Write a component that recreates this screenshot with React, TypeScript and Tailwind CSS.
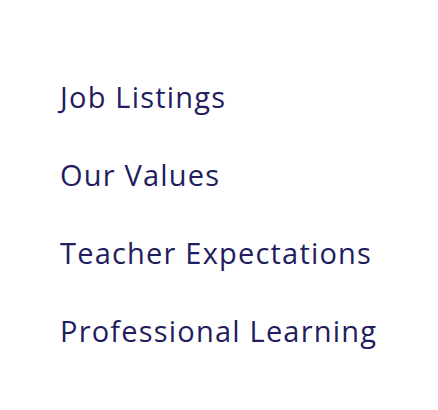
export default function App() {
  const links = ["Job Listings", "Our Values", "Teacher Expectations", "Professional Learning"]
  return (
    <div className="min-h-screen w-[438px] h-[410px] bg-white pt-[79px] pl-[60px]">
      <ul className="flex flex-col gap-[42px]">
        {links.map((l) => (
          <li key={l}>
            <a
              href="#"
              className="block text-[29px] leading-[36px] tracking-[1.2px] text-[#221d5e] font-['Open_Sans',sans-serif]"
            >
              {l}
            </a>
          </li>
        ))}
      </ul>
    </div>
  )
}
